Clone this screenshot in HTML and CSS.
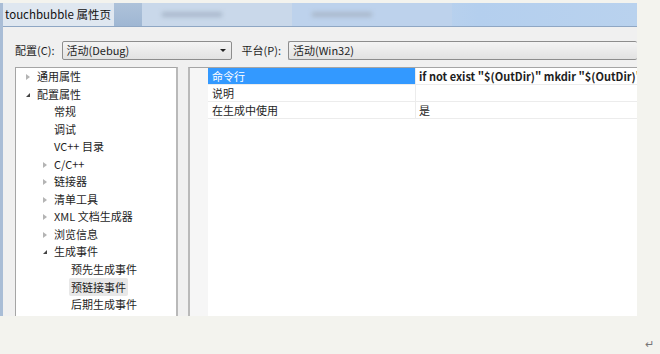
FILE: index.html
```html
<!DOCTYPE html>
<html lang="zh-CN">
<head>
  <meta charset="UTF-8">
  <title>touchbubble 属性页</title>
  <link rel="stylesheet" href="styles.css">
</head>
<body>
  <div class="shot">
    <div class="titlebar">
      <span class="title">touchbubble 属性页</span>
      <span class="tab dark"></span>
      <span class="tab blur"><i></i></span>
      <span class="tab blur2"><i></i></span>
    </div>
    <div class="config">
      <label>配置(C):</label>
      <div class="select short">活动(Debug)<span class="arrow"></span></div>
      <label class="plat">平台(P):</label>
      <div class="select long">活动(Win32)</div>
    </div>
    <div class="panes">
      <ul class="tree">
        <li class="l1"><span class="tri closed"></span>通用属性</li>
        <li class="l1"><span class="tri open"></span>配置属性</li>
        <li class="l2">常规</li>
        <li class="l2">调试</li>
        <li class="l2">VC++ 目录</li>
        <li class="l2"><span class="tri closed"></span>C/C++</li>
        <li class="l2"><span class="tri closed"></span>链接器</li>
        <li class="l2"><span class="tri closed"></span>清单工具</li>
        <li class="l2"><span class="tri closed"></span>XML 文档生成器</li>
        <li class="l2"><span class="tri closed"></span>浏览信息</li>
        <li class="l2"><span class="tri open"></span>生成事件</li>
        <li class="l3">预先生成事件</li>
        <li class="l3"><span class="sel">预链接事件</span></li>
        <li class="l3">后期生成事件</li>
      </ul>
      <div class="grid">
        <div class="row">
          <div class="name active">命令行</div>
          <div class="value strong">if not exist "$(OutDir)" mkdir "$(OutDir)"</div>
        </div>
        <div class="row">
          <div class="name">说明</div>
          <div class="value"></div>
        </div>
        <div class="row">
          <div class="name">在生成中使用</div>
          <div class="value">是</div>
        </div>
      </div>
    </div>
  </div>
  <span class="ret">↵</span>
</body>
</html>
```

FILE: styles.css
```css
body {
  margin: 0;
  background: #f3f3ee;
  font-family: "Noto Sans CJK SC", "Noto Sans", sans-serif;
  font-size: 11px;
  color: #1e1e1e;
  width: 660px;
  height: 354px;
  overflow: hidden;
  position: relative;
}
.shot {
  width: 634px;
  height: 313px;
  margin-top: 3px;
  border-left: 3px solid #a9bdd6;
  background: #f0f0f0;
  overflow: hidden;
}
.titlebar {
  height: 23px;
  display: flex;
  align-items: center;
  background: linear-gradient(to right, #dce5ef 0, #c3d6ec 55%, #b4cfee 75%, #b9d2ee 100%);
  border-bottom: 1px solid #8fa7c4;
}
.title {
  flex-shrink: 0;
  white-space: nowrap;
  font-size: 11.5px;
  color: #111;
  padding: 0 3px 0 2px;
  background: #dfe7f0;
  height: 23px;
  line-height: 23px;
}
.tab {
  flex-shrink: 0;
  height: 23px;
  display: block;
}
.tab.dark {
  width: 28px;
  background: linear-gradient(#aec2da, #9fb7d3);
}
.tab.blur {
  width: 150px;
  background: #c9d8ea;
  position: relative;
}
.tab.blur2 {
  width: 160px;
  background: #bdd2ec;
  position: relative;
}
.tab i {
  position: absolute;
  left: 20px;
  top: 9px;
  width: 60px;
  height: 5px;
  background: #aab9cc;
  filter: blur(2px);
}
.config {
  display: flex;
  align-items: center;
  padding: 13px 0 0 12px;
  height: 20px;
}
.config label {
  margin-right: 7px;
}
.config .plat {
  margin-left: 10px;
}
.select {
  height: 17px;
  line-height: 17px;
  border: 1px solid #8d8d8d;
  border-radius: 2px;
  background: linear-gradient(#f4f4f4, #e2e2e2);
  padding-left: 4px;
  position: relative;
}
.select.short {
  width: 164px;
}
.select.long {
  flex: 1;
  border-right: none;
}
.arrow {
  position: absolute;
  right: 5px;
  top: 7px;
  border-left: 3px solid transparent;
  border-right: 3px solid transparent;
  border-top: 3px solid #222;
}
.panes {
  display: flex;
  gap: 10px;
  padding: 7px 0 0 12px;
}
.tree {
  flex-shrink: 0;
  list-style: none;
  margin: 0;
  padding: 0;
  width: 160px;
  height: 260px;
  background: #fff;
  border: 1px solid #a5a5a5;
  border-right: 2px solid #b9b9b9;
}
.tree li {
  height: 17.55px;
  line-height: 17.55px;
  position: relative;
  white-space: nowrap;
}
.l1 { padding-left: 21px; }
.l2 { padding-left: 38px; }
.l3 { padding-left: 55px; }
.tri {
  position: absolute;
  top: 6px;
  width: 0;
  height: 0;
}
.l1 .tri { left: 10px; }
.l2 .tri { left: 27px; }
.tri.closed {
  border-top: 3px solid transparent;
  border-bottom: 3px solid transparent;
  border-left: 4px solid #b4b4b4;
}
.tri.open {
  top: 7px;
  border-left: 4px solid transparent;
  border-bottom: 4px solid #444;
}
.sel {
  background: #e8e8e8;
  border-radius: 2px;
  padding: 1px 2px;
  margin-left: -2px;
}
.grid {
  flex: 1;
  min-width: 0;
  overflow: hidden;
  height: 260px;
  background: #fff;
  border: 1px solid #a5a5a5;
  border-left: 2px solid #b9b9b9;
  border-right: none;
  padding-left: 18px;
  background-image: linear-gradient(to right, #f6f6f6 18px, #fff 18px);
}
.row {
  display: flex;
  height: 16px;
  line-height: 16px;
  border-bottom: 1px solid #ececec;
}
.name {
  flex-shrink: 0;
  width: 203px;
  padding-left: 4px;
  border-right: 1px solid #ececec;
}
.name.active {
  background: #3399ff;
  color: #fff;
}
.value {
  flex: 1;
  padding-left: 3px;
  white-space: nowrap;
}
.value.strong {
  font-weight: bold;
}
.ret {
  position: absolute;
  left: 645px;
  top: 335px;
  color: #777;
  font-size: 11px;
}
```
